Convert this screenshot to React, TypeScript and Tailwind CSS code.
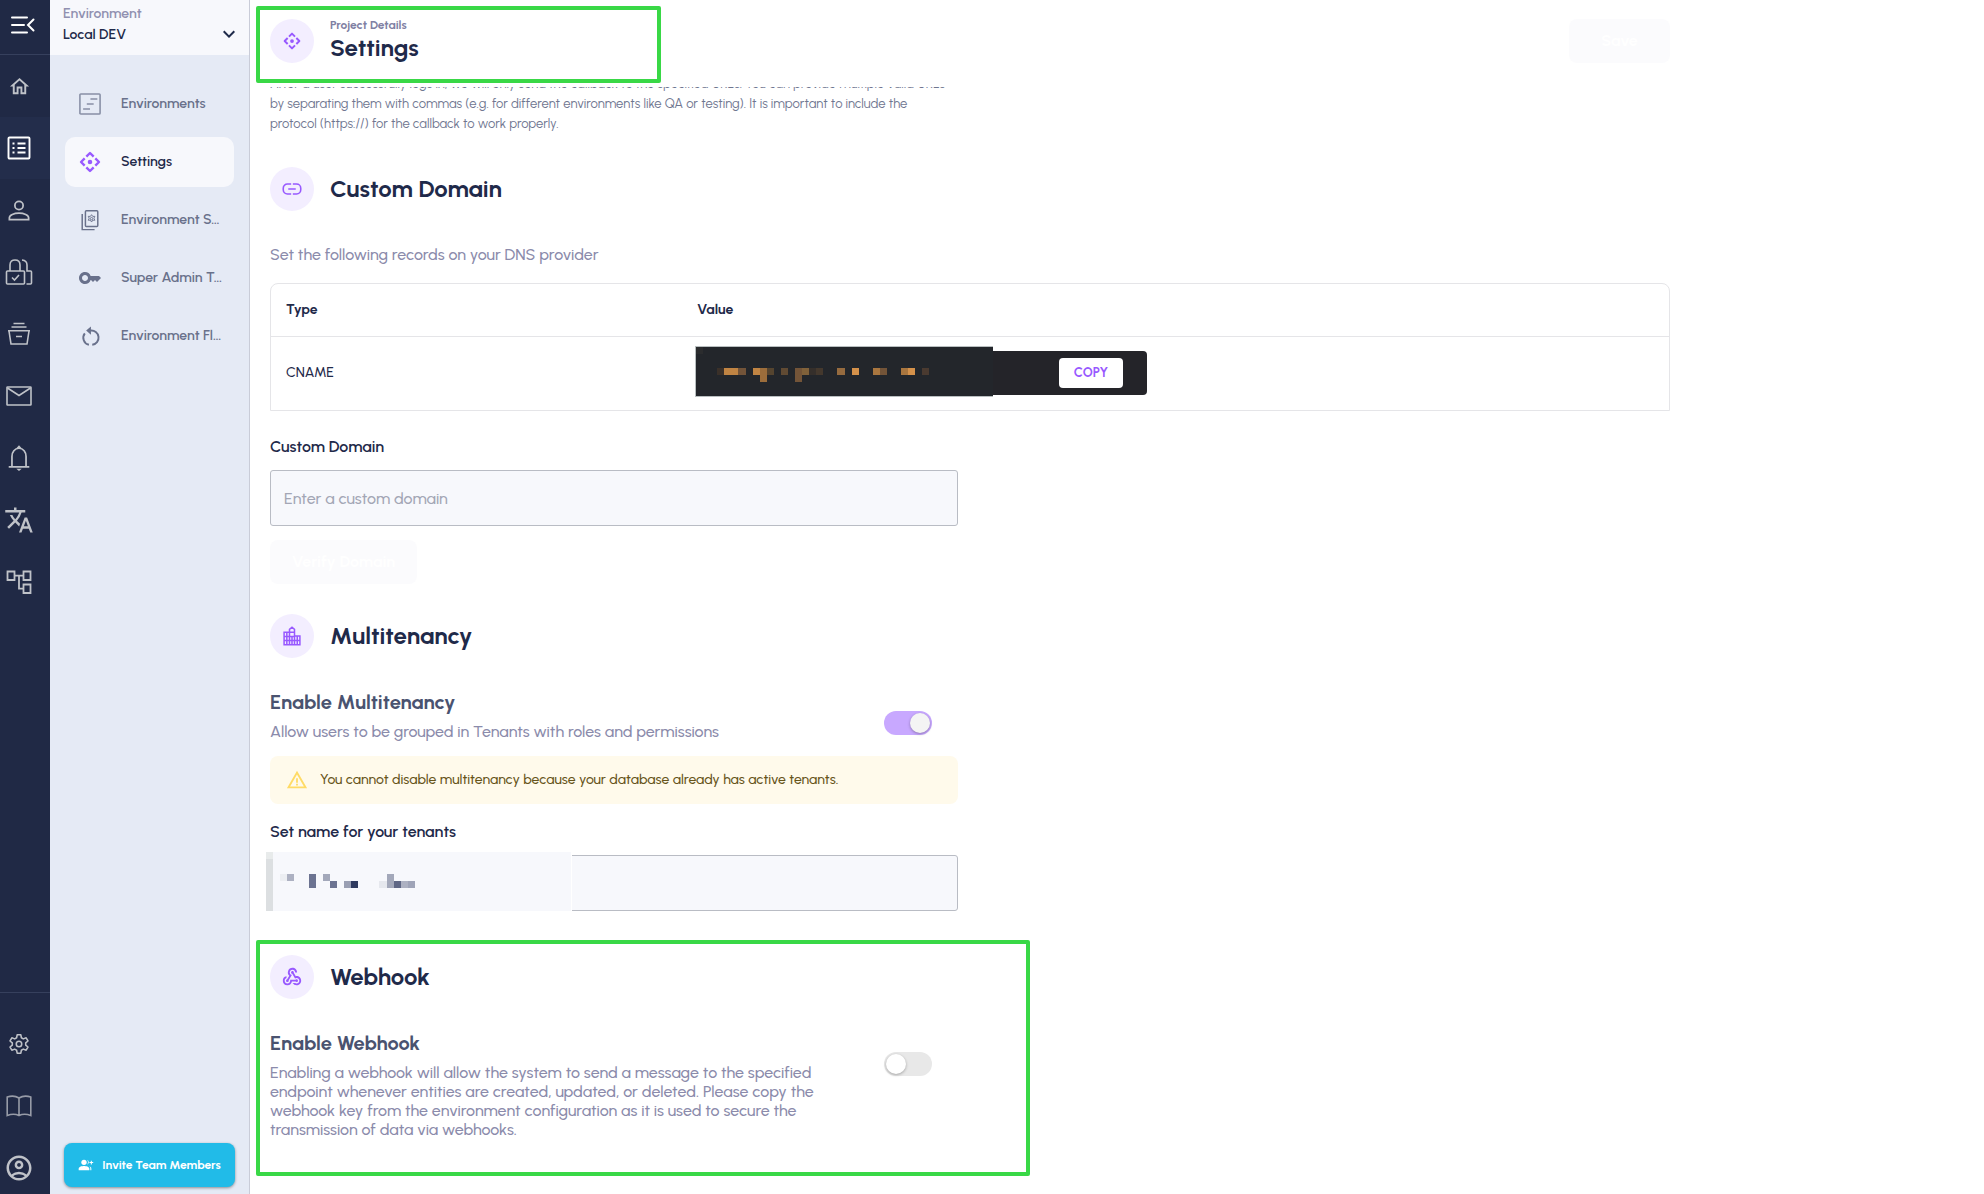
import React from 'react';
import {
  MdOutlineHome, MdTranslate, MdOutlineAccountCircle, MdKey, MdWarningAmber, MdWebhook, MdExpandMore,
} from 'react-icons/md';

type IconProps = { className?: string };

function Stroke({ className, width = 1.6, children }: IconProps & { width?: number; children: React.ReactNode }) {
  return (
    <svg viewBox="0 0 24 24" fill="none" stroke="currentColor" strokeWidth={width} className={className} aria-hidden="true">
      {children}
    </svg>
  );
}

const MenuIcon = (p: IconProps) => (
  <Stroke {...p} width={2}>
    <path strokeLinecap="round" d="M1 4.500h15M1 12h12M1 19.500h15M22.500 6.500 17 12l5.500 5.500" />
  </Stroke>
);
const ListIcon = (p: IconProps) => (
  <Stroke {...p} width={1.9}>
    <rect x="1.500" y="1.500" width="21" height="21" rx="1" />
    <path d="M10.500 7.500h8M10.500 12h8M10.500 16.500h8M5.500 7.500h2M5.500 12h2M5.500 16.500h2" />
  </Stroke>
);
const PersonIcon = (p: IconProps) => (
  <Stroke {...p} width={1.900}>
    <circle cx="12" cy="7" r="4.500" />
    <path d="M1.500 22.500V20.500c0-3 5-5 10.500-5s10.500 2 10.500 5v2z" />
  </Stroke>
);
const ApiIcon = (p: IconProps) => (
  <Stroke {...p} width={2.600}>
    <path strokeLinejoin="round" d="M8 6.200 12 2.200l4 4M8 17.800l4 4 4-4M6.200 8l-4 4 4 4M17.800 8l4 4-4 4" />
    <circle cx="12" cy="12" r="2.500" fill="currentColor" stroke="none" />
  </Stroke>
);
const LockIcon = (p: IconProps) => (
  <svg viewBox="0 0 28 28" fill="none" stroke="currentColor" strokeWidth="1.6" className={p.className} aria-hidden="true">
    <rect x="1.5" y="13" width="18" height="13" rx="1" />
    <path d="M5 13V7c0-3.500 2.200-5 5-5s5 1.500 5 5v6M7 19.500l2.500 2.500 4.500-5M17 2c3.500.3 5 2.500 5 5v6h3.500c.6 0 1 .4 1 1v11c0 .6-.4 1-1 1h-4" />
  </svg>
);
const BasketIcon = (p: IconProps) => (
  <Stroke {...p}>
    <path d="M6.500 1.500h11M4.500 5h15M1 8.800h22M2 9l2 13h16l2-13M9 14.500h6" />
  </Stroke>
);
const MailIcon = (p: IconProps) => (
  <svg viewBox="0 0 26 20" fill="none" stroke="currentColor" strokeWidth="1.600" className={p.className} aria-hidden="true">
    <rect x="1" y="1" width="24" height="18" rx=".6" />
    <path d="M1.500 2 13 9.500 24.500 2" />
  </svg>
);
const BellIcon = (p: IconProps) => (
  <Stroke {...p}>
    <path d="M2.500 20.200h19M5.500 20V10.500C5.500 6.500 8 3 12 3s6.500 3.500 6.500 7.500V20" />
    <path d="M9.500 3 12 .2 14.500 3zM9.500 22h5L12 24z" fill="currentColor" stroke="none" />
  </Stroke>
);
const TreeIcon = (p: IconProps) => (
  <svg viewBox="0 0 26 24" fill="none" stroke="currentColor" strokeWidth="1.800" className={p.className} aria-hidden="true">
    <path d="M1.500 1.500h7v8.500h-7zM17.500 1.500h7v8.500h-7zM17.500 14.500h7V23h-7zM8.500 5.700h9M13 5.700v13h4.500" />
  </svg>
);
const GearIcon = (p: IconProps) => (
  <Stroke {...p} width={1.7}>
    <path strokeLinejoin="round" d="M10 2h4l.6 3.200 2.100 1.200 3.100-1.100 2 3.400-2.500 2.100v2.400l2.500 2.100-2 3.400-3.100-1.100-2.100 1.200L14 22h-4l-.6-3.200-2.100-1.200-3.100 1.100-2-3.400 2.500-2.100v-2.400L2.200 8.700l2-3.400 3.100 1.100 2.100-1.200z" />
    <circle cx="12" cy="12" r="3" />
  </Stroke>
);
const BookIcon = (p: IconProps) => (
  <svg viewBox="0 0 26 22" fill="none" stroke="currentColor" strokeWidth="1.600" className={p.className} aria-hidden="true">
    <path d="M13 3v17.500M13 3C9.500.8 5 .8 1.200 2v18.500c4-1.600 8.500-1.600 11.800 0 3.300-1.600 7.800-1.600 11.800 0V2C21 .8 16.500.8 13 3z" />
  </svg>
);
const EnvironmentsIcon = (p: IconProps) => (
  <Stroke {...p} width={1.700}>
    <rect x="1" y="1" width="22" height="22" rx="1" />
    <path d="M12.500 6.500H20M8.500 12H16M4.500 17.500H12" />
  </Stroke>
);
const SecretsIcon = (p: IconProps) => (
  <Stroke {...p} width={1.600}>
    <rect x="7" y="2" width="13.500" height="17" rx="1" />
    <path d="M3.500 5.500v17H17" />
    <circle cx="13.700" cy="10.500" r="1.300" strokeWidth="1" />
    <path strokeWidth="1" d="m13.700 6.200 1.300 1.900 2.300-.1-1 2.100 1 2.200-2.300-.1-1.300 2-1.300-2-2.300.1 1-2.200-1-2.100 2.300.1z" />
  </Stroke>
);
const FlowIcon = (p: IconProps) => (
  <Stroke {...p} width={2.200}>
    <path d="M10.200 21.500A8.200 8.200 0 0 1 5.500 8.500M12 5.200a8.200 8.200 0 0 1 2 16.300" />
    <path d="M12.500.5v9.500L7 5.200z" fill="currentColor" stroke="none" />
  </Stroke>
);
const LinkIcon = (p: IconProps) => (
  <Stroke {...p} width={1.900}>
    <path d="M11 6H6.500a5 5 0 0 0-5 5v2a5 5 0 0 0 5 5H11M13 6h4.500a5 5 0 0 1 5 5v2a5 5 0 0 1-5 5H13M7.500 12h9" />
  </Stroke>
);
const BuildingIcon = (p: IconProps) => (
  <Stroke {...p} width={1.800}>
    <path d="M2.500 22.500V7.500H9V4l3-2.500L15 4v8h6.500v10.500zM9 7.500v15M15 12v10.500M2.500 12.500H15M2.500 17.500h19M12 12.500v10M9 7.500h6M18.300 12v10.500M5.800 7.500v15" />
  </Stroke>
);
const InviteIcon = (p: IconProps) => (
  <svg viewBox="0 0 24 24" fill="currentColor" className={p.className} aria-hidden="true">
    <circle cx="9" cy="8" r="4" />
    <path d="M1 20v-2.500C1 14.500 6 13.500 9 13.500s8 1 8 4V20zM13.500 4.200a4 4 0 0 1 0 7.600 6 6 0 0 0 0-7.600zM17 14c2 .8 3 2 3 3.500V20h-1.500v-2.500c0-1.400-.5-2.500-1.500-3.500zM19.200 5.500h1.600v2h2v1.600h-2v2h-1.600v-2h-2V7.500h2z" />
  </svg>
);

const railTop = [
  { label: 'Home', Icon: MdOutlineHome, size: 'size-[23px]' },
  { label: 'Project', Icon: ListIcon, size: 'size-6', active: true },
  { label: 'Users', Icon: PersonIcon, size: 'size-[22px]' },
  { label: 'Permissions', Icon: LockIcon, size: 'size-7' },
  { label: 'Storage', Icon: BasketIcon, size: 'size-6' },
  { label: 'Mail', Icon: MailIcon, size: 'w-[26px] h-5' },
  { label: 'Notifications', Icon: BellIcon, size: 'size-[26px]' },
  { label: 'Translations', Icon: MdTranslate, size: 'size-[30px]' },
  { label: 'Workflows', Icon: TreeIcon, size: 'w-[26px] h-6' },
];
const railBottom = [
  { label: 'Preferences', Icon: GearIcon, size: 'size-[22px]' },
  { label: 'Documentation', Icon: BookIcon, size: 'w-[26px] h-[22px] opacity-75' },
  { label: 'Account', Icon: MdOutlineAccountCircle, size: 'size-[30px]' },
];

function RailButton({ label, Icon, size, active }: { label: string; Icon: React.ElementType; size: string; active?: boolean }) {
  return (
    <button aria-label={label} className={`flex h-[62px] w-full shrink-0 items-center justify-center pr-3 ${active ? 'bg-[#232d4b] text-white' : 'text-[#bfc2c8]'}`}>
      <Icon className={`shrink-0 ${size}`} />
    </button>
  );
}

const navItems = [
  { label: 'Environments', Icon: EnvironmentsIcon, size: 'size-[22px] opacity-75' },
  { label: 'Settings', Icon: ApiIcon, size: 'size-[22px] text-[#9859ff]', active: true },
  { label: 'Environment S…', Icon: SecretsIcon, size: 'size-[22px]' },
  { label: 'Super Admin T…', Icon: MdKey, size: 'size-6' },
  { label: 'Environment Fl…', Icon: FlowIcon, size: 'size-[21px]' },
];

function SectionTitle({ Icon, iconSize = 'size-5', eyebrow, title }: { Icon: React.ElementType; iconSize?: string; eyebrow?: string; title: string }) {
  return (
    <div className="flex h-11 items-center gap-4">
      <span className="flex size-11 shrink-0 items-center justify-center rounded-full bg-[#f3eeff] text-[#9859ff]">
        <Icon className={iconSize} />
      </span>
      <div>
        {eyebrow && <p className="text-xs leading-[14px] font-bold text-[#8080a3]">{eyebrow}</p>}
        <h2 className="text-2xl leading-8 font-bold">{title}</h2>
      </div>
    </div>
  );
}

function Toggle({ id, on }: { id: string; on?: boolean }) {
  return (
    <span className="relative flex h-6 w-12 shrink-0">
      <input
        id={id}
        type="checkbox"
        role="switch"
        defaultChecked={on}
        disabled={on}
        className="peer h-6 w-12 appearance-none rounded-full bg-[#e8e8e8] checked:bg-[#c8a8ff]"
      />
      <span className="pointer-events-none absolute top-[2px] left-[2px] size-5 rounded-full bg-white shadow-[0_1px_3px_rgba(0,0,0,0.3)] peer-checked:left-[26px] peer-checked:bg-[#f4f4f4]" />
    </span>
  );
}

type Cell = [number, number, string, number?];

const valueCells: Cell[] = [
  [0, 0, '#2b2c2e'], [3, 3, '#3a3029'], [4, 3, '#c08443'], [5, 3, '#c08443'], [6, 3, '#735439'], [8, 3, '#c08443'],
  [9, 3, '#9c6d3b', 2], [10, 3, '#55442f'], [12, 3, '#604a33'], [14, 3, '#735438', 2], [15, 3, '#80613a'],
  [16, 3, '#352f2b'], [17, 3, '#44382d'], [20, 3, '#966b3f'], [22, 3, '#d4914a'], [25, 3, '#a9763f'],
  [26, 3, '#735438'], [29, 3, '#a9763f'], [30, 3, '#d4914a'], [32, 3, '#4a3a30'],
];
const tenantCells: Cell[] = [
  [0, 0, '#e8ebeb'], [0, 1, '#dcdfe1', 8], [2, 3, '#eceef2'], [3, 3, '#adb1c2'], [6, 3, '#6c7391', 2], [8, 3, '#a3a8ba'],
  [9, 4, '#6c7391'], [11, 4, '#9a9fb3'], [12, 4, '#2f3a5f'], [16, 4, '#e6e8ee'], [17, 3, '#a3a8ba', 2],
  [18, 4, '#5f6785'], [19, 4, '#adb1c2'], [20, 4, '#9fa4b8'],
];

function Mosaic({ cells, viewBox, className }: { cells: Cell[]; viewBox: string; className: string }) {
  return (
    <svg viewBox={viewBox} preserveAspectRatio="none" shapeRendering="crispEdges" className={className} aria-hidden="true">
      {cells.map(([x, y, fill, h = 1]) => (
        <rect key={`${x}-${y}`} x={x} y={y} width="1" height={h} fill={fill} />
      ))}
    </svg>
  );
}

const inputClass = 'block h-14 w-full rounded-[3px] border border-[#b9bcc4] bg-[#f7f8fc] px-[13px] text-base font-medium placeholder:text-[#a3a6b5]';
const bodyClass = 'text-base font-medium text-[#8b8bab]';

export default function App() {
  return (
    <div className="flex h-screen overflow-hidden bg-white font-['Urbanist','Lato',sans-serif] text-[#1f2a4a]">
      <nav aria-label="Main" className="flex w-[50px] shrink-0 flex-col overflow-hidden bg-[#202945]">
        <button aria-label="Collapse menu" className="flex h-[55px] w-full shrink-0 items-center justify-center border-b border-[#36405d] pr-1 pb-1 text-white">
          <MenuIcon className="size-6" />
        </button>
        {railTop.map((item) => <RailButton key={item.label} {...item} />)}
        <div className="-mb-[5px] mt-auto border-t border-[#36405d] pt-5">
          {railBottom.map((item) => <RailButton key={item.label} {...item} />)}
        </div>
      </nav>

      <aside className="flex w-[200px] shrink-0 flex-col border-r border-[#c9ccd8] bg-[#e5eaf5]">
        <button className="flex h-[55px] w-full shrink-0 items-center justify-between bg-[#f7f8fc] pr-2 pb-2 pl-[13px] text-left text-sm leading-[21px] font-semibold">
          <span>
            <span className="block text-[#9090b0]">Environment</span>
            <span className="block">Local DEV</span>
          </span>
          <MdExpandMore className="mt-5 size-6" />
        </button>
        <ul className="mx-[15px] mt-6 flex flex-col gap-2">
          {navItems.map(({ label, Icon, size, active }) => (
            <li key={label}>
              <a href="#" className={`flex h-[50px] items-center gap-[19px] rounded-[10px] pl-[13px] text-sm font-semibold whitespace-nowrap ${active ? 'bg-[#f7f8fc] text-[#1f2a4a]' : 'text-[#69718b]'}`}>
                <span className="flex w-6 shrink-0 justify-center"><Icon className={size} /></span>
                {label}
              </a>
            </li>
          ))}
        </ul>
        <button className="mx-[14px] mt-auto mb-[7px] flex h-11 items-center justify-center gap-2 rounded-lg bg-[#21bbe8] text-xs font-bold whitespace-nowrap text-white shadow-[0_1px_3px_rgba(0,0,0,0.4)]">
          <InviteIcon className="size-4" />
          Invite Team Members
        </button>
      </aside>

      <main className="flex min-w-0 flex-1 flex-col">
        <header className="relative z-10 h-[87px] shrink-0 bg-white pt-[19px] pr-5 pl-5">
          <div className="flex max-w-[1400px] justify-between">
            <SectionTitle Icon={ApiIcon} iconSize="size-[18px]" eyebrow="Project Details" title="Settings" />
            <button disabled className="h-11 w-[101px] rounded-lg bg-[#fbfbfd] text-base font-bold text-white">Save</button>
          </div>
          <div className="pointer-events-none absolute top-[6px] left-[6px] h-[77px] w-[405px] rounded-[2px] border-4 border-[#39d846]" />
        </header>

        <div className="flex min-h-0 flex-1 flex-col overflow-hidden px-5">
          <div className="max-w-[1400px]">
            <p className="-mt-[13px] max-w-[688px] text-[13px] leading-5 whitespace-nowrap text-[#6f7690]">
              After a user successfully logs in, we will only send the callback to the specified URLs. You can provide multiple valid URLs
              <br />by separating them with commas (e.g. for different environments like QA or testing). It is important to include the
              <br />protocol (https://) for the callback to work properly.
            </p>

            <section className="mt-[33px]">
              <SectionTitle Icon={LinkIcon} title="Custom Domain" />
              <p className={`mt-[34px] leading-5 ${bodyClass}`}>Set the following records on your DNS provider</p>
              <div className="mt-[18px] rounded-t-lg border border-[#e5e5e8]">
                <table className="w-full table-fixed text-left text-sm">
                  <thead>
                    <tr className="h-[52px] border-b border-[#e5e5e8]">
                      <th className="w-[411px] pl-[15px] font-bold">Type</th>
                      <th className="pl-[15px] font-bold">Value</th>
                    </tr>
                  </thead>
                  <tbody>
                    <tr className="h-[74px]">
                      <td className="pl-[15px] font-medium">CNAME</td>
                      <td className="pl-[15px]">
                        <div className="relative flex h-11 w-[450px] items-center justify-end rounded bg-[#242429] pr-6">
                          <Mosaic cells={valueCells} viewBox="0 0 42 7" className="absolute -top-[5px] -left-[2px] h-[51px] w-[298px] border-y border-l border-[#b9bfc0] bg-[#23262b]" />
                          <button className="h-[30px] w-16 rounded bg-white text-[13px] font-bold text-[#9859ff]">COPY</button>
                        </div>
                      </td>
                    </tr>
                  </tbody>
                </table>
              </div>
              <div className="mt-[26px] max-w-[688px]">
                <label htmlFor="domain" className="block text-base leading-5 font-semibold">Custom Domain</label>
                <input id="domain" placeholder="Enter a custom domain" className={`mt-[13px] ${inputClass}`} />
                <button disabled className="mt-[14px] h-11 w-[147px] rounded-lg bg-[#fbfbfd] text-base font-bold text-white">Verify Domain</button>
              </div>
            </section>

            <section className="mt-[30px] max-w-[688px]">
              <SectionTitle Icon={BuildingIcon} title="Multitenancy" />
              <div className="mt-8 flex items-start justify-between pr-[26px]">
                <div>
                  <label htmlFor="multitenancy" className="block text-xl leading-6 font-bold text-[#4a5370]">Enable Multitenancy</label>
                  <p className={`mt-2 leading-5 ${bodyClass}`}>Allow users to be grouped in Tenants with roles and permissions</p>
                </div>
                <div className="pt-[21px]"><Toggle id="multitenancy" on /></div>
              </div>
              <div className="mt-[14px] flex h-12 items-center gap-3 rounded-lg bg-[#fffaeb] px-4 text-sm font-medium text-[#665419]">
                <MdWarningAmber className="size-[22px] text-[#ffdb66]" />
                You cannot disable multitenancy because your database already has active tenants.
              </div>
              <label htmlFor="tenant-name" className="mt-[18px] block text-base leading-5 font-semibold">Set name for your tenants</label>
              <div className="relative mt-[13px]">
                <input id="tenant-name" className={inputClass} />
                <Mosaic cells={tenantCells} viewBox="0 0 43 8.2" className="pointer-events-none absolute -top-[3px] -left-1 h-[59px] w-[306px] border-r border-white bg-[#f7f8fc]" />
              </div>
            </section>

            <section className="relative mt-[44px] max-w-[688px]">
              <div className="pointer-events-none absolute -top-[15px] -left-[14px] h-[236px] w-[774px] rounded-[2px] border-4 border-[#39d846]" />
              <SectionTitle Icon={MdWebhook} iconSize="size-[22px]" title="Webhook" />
              <div className="mt-8 flex items-start justify-between pr-[26px]">
                <div className="max-w-[570px]">
                  <label htmlFor="webhook" className="block text-xl leading-6 font-bold text-[#4a5370]">Enable Webhook</label>
                  <p className={`mt-2 leading-[19px] whitespace-nowrap ${bodyClass}`}>
                    Enabling a webhook will allow the system to send a message to the specified
                    <br />endpoint whenever entities are created, updated, or deleted. Please copy the
                    <br />webhook key from the environment configuration as it is used to secure the
                    <br />transmission of data via webhooks.
                  </p>
                </div>
                <div className="pt-[21px]"><Toggle id="webhook" /></div>
              </div>
            </section>
          </div>
        </div>
      </main>
    </div>
  );
}
